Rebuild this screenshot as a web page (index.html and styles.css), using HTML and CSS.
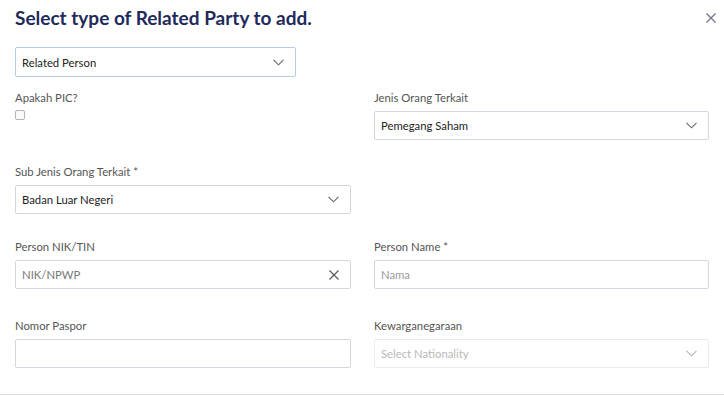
FILE: index.html
```html
<!DOCTYPE html>
<html lang="en">
<head>
    <meta charset="UTF-8">
    <title>Add Related Party</title>
    <link rel="stylesheet" href="styles.css">
</head>
<body>
<div class="modal">
    <div class="modal-header">
        <h1>Select type of Related Party to add.</h1>
        <button class="close" type="button" aria-label="Close">
            <svg width="10" height="10" viewBox="0 0 10 10"><path d="M0.5 0.5 L9.5 9.5 M9.5 0.5 L0.5 9.5" stroke="#6b7280" stroke-width="1.2" fill="none"/></svg>
        </button>
    </div>

    <div class="select type-select focused">
        <span>Related Person</span>
        <svg class="chevron" width="11" height="7" viewBox="0 0 11 7"><path d="M0.5 0.8 L5.5 5.8 L10.5 0.8" stroke="#666" stroke-width="1.1" fill="none"/></svg>
    </div>

    <div class="form-grid">
        <div class="field row-1">
            <label>Apakah PIC?</label>
            <span class="checkbox"></span>
        </div>
        <div class="field row-1">
            <label>Jenis Orang Terkait</label>
            <div class="select">
                <span>Pemegang Saham</span>
                <svg class="chevron" width="11" height="7" viewBox="0 0 11 7"><path d="M0.5 0.8 L5.5 5.8 L10.5 0.8" stroke="#666" stroke-width="1.1" fill="none"/></svg>
            </div>
        </div>

        <div class="field row-2">
            <label>Sub Jenis Orang Terkait *</label>
            <div class="select">
                <span>Badan Luar Negeri</span>
                <svg class="chevron" width="11" height="7" viewBox="0 0 11 7"><path d="M0.5 0.8 L5.5 5.8 L10.5 0.8" stroke="#666" stroke-width="1.1" fill="none"/></svg>
            </div>
        </div>
        <div class="field row-2"></div>

        <div class="field row-3">
            <label>Person NIK/TIN</label>
            <div class="input">
                <span class="placeholder dark">NIK/NPWP</span>
                <svg class="clear" width="10" height="10" viewBox="0 0 10 10"><path d="M0.5 0.5 L9.5 9.5 M9.5 0.5 L0.5 9.5" stroke="#555" stroke-width="1.1" fill="none"/></svg>
            </div>
        </div>
        <div class="field row-3">
            <label>Person Name *</label>
            <div class="input">
                <span class="placeholder">Nama</span>
            </div>
        </div>

        <div class="field row-4">
            <label>Nomor Paspor</label>
            <div class="input"></div>
        </div>
        <div class="field row-4">
            <label>Kewarganegaraan</label>
            <div class="select disabled">
                <span>Select Nationality</span>
                <svg class="chevron" width="11" height="7" viewBox="0 0 11 7"><path d="M0.5 0.8 L5.5 5.8 L10.5 0.8" stroke="#b5b5b5" stroke-width="1.1" fill="none"/></svg>
            </div>
        </div>
    </div>
</div>
</body>
</html>
```

FILE: styles.css
```css
* {
    box-sizing: border-box;
    margin: 0;
    padding: 0;
}
body {
    font-family: Lato, "Noto Sans", sans-serif;
    background-color: #fff;
    color: #333;
    font-size: 11.3px;
}
.modal {
    width: 724px;
    height: 395px;
    padding: 0 16px 0 15px;
    border-bottom: 1px solid #dcdcdc;
}
.modal-header {
    display: flex;
    justify-content: space-between;
    align-items: center;
    height: 34px;
    padding-top: 1px;
}
h1 {
    font-size: 19px;
    font-weight: bold;
    color: #1e2a5c;
}
.close {
    background: none;
    border: none;
    width: 10px;
    height: 10px;
    margin-right: -8px;
    display: flex;
}
.select, .input {
    display: flex;
    align-items: center;
    justify-content: space-between;
    height: 29px;
    padding: 0 11px 0 6px;
    border: 1px solid #d3d7dd;
    border-radius: 2px;
    color: #222;
}
.type-select {
    width: 281px;
    height: 30px;
    margin-top: 13px;
}
.select.focused {
    border-color: #b6cbe6;
}
.select.disabled {
    border-color: #ebebeb;
    color: #b9b9b9;
}
.placeholder {
    color: #9a9a9a;
}
.placeholder.dark {
    color: #777;
}
.form-grid {
    display: grid;
    grid-template-columns: 336px 335px;
    column-gap: 23px;
    margin-top: 14px;
}
.field {
    display: flex;
    flex-direction: column;
    min-height: 49px;
}
label {
    display: block;
    line-height: 14px;
    margin-bottom: 5px;
    color: #555;
}
.checkbox {
    width: 10px;
    height: 10px;
    border: 1px solid #b3b3b3;
    border-radius: 2px;
    background-color: #fafafa;
}
.field .select, .field .input {
    margin-top: 1px;
}
.row-2 {
    margin-top: 25px;
}
.row-3 {
    margin-top: 26px;
}
.row-4 {
    margin-top: 30px;
}
```
